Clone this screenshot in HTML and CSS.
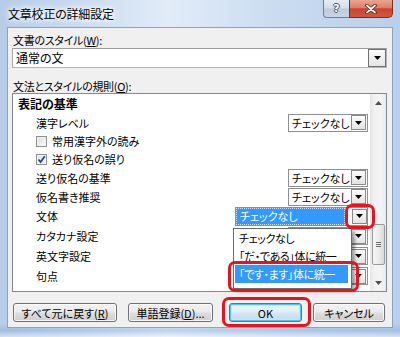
FILE: index.html
```html
<!DOCTYPE html>
<html lang="ja">
<head>
<meta charset="utf-8">
<title>文章校正の詳細設定</title>
<link rel="stylesheet" href="styles.css">
</head>
<body>
<div class="window">
  <div class="titlebar">
    <div class="title">文章校正の詳細設定</div>
    <div class="caption-buttons">
      <div class="cap-help">?</div>
      <div class="cap-close">
        <svg width="12" height="10" viewBox="0 0 12 10"><path d="M2 1.5L10 8.5M10 1.5L2 8.5" stroke="#6b2014" stroke-width="3.6" stroke-linecap="round"/><path d="M2 1.5L10 8.5M10 1.5L2 8.5" stroke="#ffffff" stroke-width="1.8" stroke-linecap="round"/></svg>
      </div>
    </div>
  </div>
  <div class="client">
    <div class="label">文書のスタイル(<u>W</u>):</div>
    <div class="combo main-combo">
      <span class="combo-text">通常の文</span>
      <span class="drop-btn big"><svg width="7" height="4" viewBox="0 0 7 4"><path d="M0 0H7L3.5 4Z" fill="#000"/></svg></span>
    </div>
    <div class="label label2">文法とスタイルの規則(<u>O</u>):</div>
    <div class="listbox">
      <div class="rows">
        <div class="row head">表記の基準</div>
        <div class="row">
          <span class="name">漢字レベル</span>
          <div class="combo small"><span class="combo-text">チェックなし</span><span class="drop-btn"><svg width="7" height="4" viewBox="0 0 7 4"><path d="M0 0H7L3.5 4Z" fill="#000"/></svg></span></div>
        </div>
        <div class="row cb">
          <span class="check"></span><span class="name">常用漢字外の読み</span>
        </div>
        <div class="row cb">
          <span class="check checked"><svg width="9" height="9" viewBox="0 0 9 9"><path d="M1.5 4.5L3.6 7L7.8 1.2" fill="none" stroke="#27418a" stroke-width="1.7"/></svg></span><span class="name">送り仮名の誤り</span>
        </div>
        <div class="row">
          <span class="name">送り仮名の基準</span>
          <div class="combo small"><span class="combo-text">チェックなし</span><span class="drop-btn"><svg width="7" height="4" viewBox="0 0 7 4"><path d="M0 0H7L3.5 4Z" fill="#000"/></svg></span></div>
        </div>
        <div class="row">
          <span class="name">仮名書き推奨</span>
          <div class="combo small"><span class="combo-text">チェックなし</span><span class="drop-btn"><svg width="7" height="4" viewBox="0 0 7 4"><path d="M0 0H7L3.5 4Z" fill="#000"/></svg></span></div>
        </div>
        <div class="row tall">
          <span class="name">文体</span>
          <div class="combo wide"><span class="combo-text selected">チェックなし</span><span class="drop-btn"><svg width="7" height="4" viewBox="0 0 7 4"><path d="M0 0H7L3.5 4Z" fill="#000"/></svg></span></div>
        </div>
        <div class="row tall">
          <span class="name">カタカナ設定</span>
          <div class="combo small"><span class="combo-text covered">チェックなし</span><span class="drop-btn"><svg width="7" height="4" viewBox="0 0 7 4"><path d="M0 0H7L3.5 4Z" fill="#000"/></svg></span></div>
        </div>
        <div class="row tall">
          <span class="name">英文字設定</span>
          <div class="combo small"><span class="combo-text covered">チェックなし</span><span class="drop-btn"><svg width="7" height="4" viewBox="0 0 7 4"><path d="M0 0H7L3.5 4Z" fill="#000"/></svg></span></div>
        </div>
        <div class="row tall">
          <span class="name">句点</span>
          <div class="combo small"><span class="combo-text covered">チェックなし</span><span class="drop-btn"><svg width="7" height="4" viewBox="0 0 7 4"><path d="M0 0H7L3.5 4Z" fill="#000"/></svg></span></div>
        </div>
      </div>
      <div class="scrollbar">
        <div class="sb-btn"><svg width="7" height="4" viewBox="0 0 7 4"><path d="M0 4H7L3.5 0Z" fill="#505050"/></svg></div>
        <div class="sb-track">
          <div class="sb-thumb"><span class="grip"></span><span class="grip"></span><span class="grip"></span></div>
        </div>
        <div class="sb-btn"><svg width="7" height="4" viewBox="0 0 7 4"><path d="M0 0H7L3.5 4Z" fill="#505050"/></svg></div>
      </div>
    </div>
    <div class="buttons">
      <div class="btn btn-reset">すべて元に戻す(<u>R</u>)</div>
      <div class="btn btn-dict">単語登録(<u>D</u>)...</div>
      <div class="btn btn-ok">OK</div>
      <div class="btn btn-cancel">キャンセル</div>
    </div>
  </div>
</div>

<div class="popup">
  <div class="popup-item">チェックなし</div>
  <div class="popup-item">「だ・である」体に統一</div>
  <div class="popup-item active">「です・ます」体に統一</div>
</div>

<div class="mark mark-drop"></div>
<div class="mark mark-item"></div>
<div class="mark mark-ok"></div>
</body>
</html>
```

FILE: styles.css
```css
* {
  box-sizing: border-box;
}

html,
body {
  margin: 0;
  padding: 0;
}

body {
  width: 400px;
  height: 337px;
  overflow: hidden;
  position: relative;
  font-family: "Noto Sans CJK JP", "Noto Sans", sans-serif;
  font-size: 11px;
  color: #000;
  font-feature-settings: "palt";
  background:
    linear-gradient(to bottom, rgba(255, 255, 255, 0) 96%, rgba(120, 160, 210, 0.35) 98%, rgba(255, 255, 255, 0.4) 100%),
    linear-gradient(to right, #b6cce7 0%, #c9dbf0 20%, #e2ecf8 42%, #d2e1f3 60%, #c3d7ee 80%, #b9cfea 100%);
}

.window {
  display: flex;
  flex-direction: column;
  height: 337px;
}

/* Title bar */
.titlebar {
  height: 27px;
  flex: none;
  display: flex;
  align-items: flex-start;
  padding-left: 8px;
  padding-right: 7px;
}

.title {
  font-size: 12px;
  line-height: 28px;
  letter-spacing: -0.2px;
  text-shadow: 0 0 4px #fff, 0 0 7px #fff, 0 0 10px #fff;
}

.caption-buttons {
  margin-left: auto;
  display: flex;
  height: 18px;
}

.cap-help {
  width: 26px;
  height: 18px;
  border: 1px solid #6e7e94;
  border-top: none;
  border-right: none;
  border-radius: 0 0 0 4px;
  background: linear-gradient(#e6edf6 0%, #d3ddea 48%, #bfcbdb 52%, #c9d5e4 100%);
  display: flex;
  justify-content: center;
  align-items: center;
  font-family: "DejaVu Sans", sans-serif;
  font-weight: bold;
  font-size: 11px;
  color: #fff;
  text-shadow: 1px 0 0 #4a5567, -1px 0 0 #4a5567, 0 1px 0 #4a5567, 0 -1px 0 #4a5567;
}

.cap-close {
  width: 44px;
  height: 18px;
  border: 1px solid #7f2c1f;
  border-top: none;
  border-radius: 0 0 5px 0;
  background: linear-gradient(#e9a593 0%, #dc8069 45%, #c84530 52%, #d0593f 100%);
  display: flex;
  justify-content: center;
  align-items: center;
}

/* Client area */
.client {
  margin: 0 7px;
  height: 301px;
  flex: none;
  background: #f0f0f0;
  border: 1px solid #8ea2bc;
  display: flex;
  flex-direction: column;
  padding: 0 4px;
}

.label {
  margin-top: 5px;
  padding-left: 1px;
  line-height: 14px;
  height: 14px;
  white-space: nowrap;
  letter-spacing: -0.3px;
}

.label2 {
  margin-top: 12px;
  line-height: 13px;
  height: 13px;
}

/* Combo boxes */
.combo {
  display: flex;
  align-items: center;
  background: #fff;
  border: 1px solid #a3a3a3;
}

.main-combo {
  margin-top: 1px;
  width: 375px;
  height: 20px;
  border-color: #9c9c9c #b5b5b5 #b5b5b5 #a8a8a8;
  font-size: 12px;
}

.combo-text {
  flex: 1;
  padding-left: 3px;
  line-height: 16px;
  white-space: nowrap;
  overflow: hidden;
}

.combo-text.covered {
  visibility: hidden;
}

.drop-btn {
  width: 15px;
  height: 15px;
  margin-right: 1px;
  border: 1px solid #8a8a8a;
  background: linear-gradient(#fbfbfb, #e4e4e4);
  display: flex;
  justify-content: center;
  align-items: center;
  flex: none;
}

.drop-btn.big {
  width: 18px;
  height: 18px;
  margin-right: 0;
  border-color: #6f6f6f;
}

.combo.small {
  width: 80px;
  height: 18px;
  margin-left: auto;
  border-color: #8f8f8f;
}

.combo.wide {
  width: 133px;
  height: 19px;
  margin-left: auto;
  border-color: #8f8f8f;
}

.combo-text.selected {
  flex: none;
  width: 109px;
  height: 17px;
  margin-right: 7px;
  padding-left: 4px;
  background: #3399ff;
  color: #fff;
  outline: 1px dotted #c8e0ff;
  outline-offset: -1px;
}

/* List box */
.listbox {
  width: 375px;
  height: 199px;
  flex: none;
  border: 1px solid #828790;
  background: #fff;
  display: flex;
}

.rows {
  width: 357px;
  padding-right: 2px;
  display: flex;
  flex-direction: column;
}

.row {
  height: 19px;
  flex: none;
  display: flex;
  align-items: center;
  padding-left: 23px;
  white-space: nowrap;
}

.row.cb {
  height: 18px;
}

.row.tall {
  height: 20px;
}

.row.head {
  padding-left: 5px;
  font-weight: bold;
  font-size: 12px;
}

.check {
  width: 11px;
  height: 11px;
  margin-right: 5px;
  border: 1px solid #8e8f8f;
  background: linear-gradient(135deg, #dcdcdc, #fbfbfb);
  box-shadow: inset 0 0 0 1px #f4f4f4;
  display: flex;
  justify-content: center;
  align-items: center;
  flex: none;
}

/* Scrollbar */
.scrollbar {
  width: 16px;
  display: flex;
  flex-direction: column;
  background: linear-gradient(to right, #e6e6e6 0%, #f3f3f3 30%, #f3f3f3 70%, #e9e9e9 100%);
}

.sb-btn {
  height: 17px;
  flex: none;
  display: flex;
  justify-content: center;
  align-items: center;
}

.sb-track {
  flex: 1;
  padding-top: 113px;
  display: flex;
  flex-direction: column;
  align-items: center;
}

.sb-thumb {
  width: 13px;
  height: 41px;
  border: 1px solid #9a9a9a;
  border-radius: 2px;
  background: linear-gradient(to right, #f6f6f6 0%, #ececec 50%, #d9d9d9 100%);
  display: flex;
  flex-direction: column;
  justify-content: center;
  align-items: center;
  gap: 1px;
}

.grip {
  width: 5px;
  height: 1px;
  background: #6e6e6e;
}

/* Dialog buttons */
.buttons {
  margin-top: 11px;
  display: flex;
  padding-left: 1px;
}

.btn {
  height: 19px;
  border: 1px solid #707070;
  border-radius: 3px;
  background: linear-gradient(#f2f2f2 0%, #ebebeb 48%, #dddddd 52%, #cfcfcf 100%);
  box-shadow: inset 0 0 0 1px rgba(255, 255, 255, 0.8);
  display: flex;
  justify-content: center;
  align-items: center;
  line-height: 16px;
  white-space: nowrap;
  flex: none;
}

.btn-reset {
  width: 104px;
}

.btn-dict {
  width: 85px;
  margin-left: 11px;
}

.btn-ok {
  width: 73px;
  margin-left: 16px;
  border-color: #3c7fb1;
  box-shadow: inset 0 0 0 1px #4cc4ef, inset 0 0 0 2px #bde8f8;
  background: linear-gradient(#eaf6fd 0%, #e0eef7 48%, #d3e6f3 52%, #c5dcec 100%);
}

.btn-cancel {
  width: 72px;
  margin-left: 11px;
}

/* Drop-down popup (menu overlay) */
.popup {
  position: absolute;
  left: 233px;
  top: 228px;
  width: 119px;
  height: 61px;
  background: #fff;
  border: 1px solid #6b6b6b;
  box-shadow: 3px 3px 3px rgba(0, 0, 0, 0.35);
  padding: 0 3px 0 1px;
}

.popup-item {
  height: 18px;
  line-height: 18px;
  padding-left: 4px;
  white-space: nowrap;
  letter-spacing: -0.4px;
}

.popup-item.active {
  background: #3399ff;
  color: #fff;
}

/* Red annotation marks */
.mark {
  position: absolute;
  border: 3px solid #e8141d;
  border-radius: 7px;
}

.mark-drop {
  left: 345px;
  top: 204px;
  width: 30px;
  height: 25px;
}

.mark-item {
  left: 228px;
  top: 261px;
  width: 131px;
  height: 31px;
}

.mark-ok {
  left: 222px;
  top: 297px;
  width: 89px;
  height: 30px;
}
```
